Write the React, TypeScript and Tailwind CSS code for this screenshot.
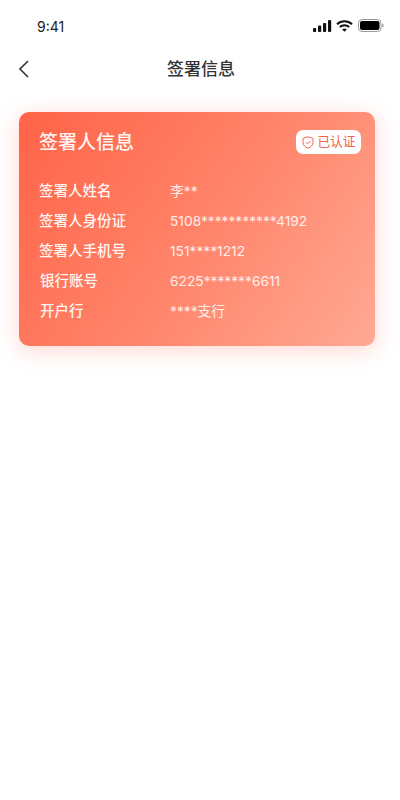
const FONT = "font-['Inter','Noto_Sans_CJK_SC',sans-serif]";

const ROWS = [
  { label: "签署人姓名", value: "李**", indent: false },
  { label: "签署人身份证", value: "5108***********4192", indent: false },
  { label: "签署人手机号", value: "151****1212", indent: false },
  { label: "银行账号", value: "6225*******6611", indent: true },
  { label: "开户行", value: "****支行", indent: true },
];

function StatusBar() {
  return (
    <div className="flex h-[44px] items-end justify-between pl-[37px] pr-[16px] pb-[9px]">
      <span className="text-[14px] leading-[17px] text-[#222222]">9:41</span>
      <div className="flex items-center gap-[4px] pb-[3px]">
        {/* signal */}
        <svg width="19" height="12" viewBox="0 0 19 12" fill="#111111">
          <rect x="0" y="8" width="3.2" height="4" rx="1" />
          <rect x="5" y="5.5" width="3.2" height="6.5" rx="1" />
          <rect x="10" y="3" width="3.2" height="9" rx="1" />
          <rect x="15" y="0" width="3.2" height="12" rx="1" />
        </svg>
        {/* wifi */}
        <svg width="17" height="12" viewBox="0 0 17 12" fill="none" stroke="#111111" strokeWidth="2">
          <path d="M1 4.2C5.2 0.2 11.8 0.2 16 4.2" />
          <path d="M3.8 7C6.5 4.5 10.5 4.5 13.2 7" />
          <path d="M8.5 11.8L6.2 9.4C7.5 8.3 9.5 8.3 10.8 9.4Z" fill="#111111" stroke="none" />
        </svg>
        {/* battery */}
        <svg width="26" height="13" viewBox="0 0 26 13" fill="none" className="ml-[1px]">
          <rect x="0.5" y="0.5" width="22.5" height="12" rx="3.5" stroke="#9a9a9a" />
          <rect x="2" y="2" width="19.5" height="9" rx="2" fill="#000000" />
          <path d="M24.2 4.5C25.2 4.9 25.6 5.6 25.6 6.5C25.6 7.4 25.2 8.1 24.2 8.5Z" fill="#9a9a9a" />
        </svg>
      </div>
    </div>
  );
}

function NavBar() {
  return (
    <div className="relative flex h-[50px] items-center justify-center pl-[2px]">
      <svg
        width="12"
        height="18"
        viewBox="0 0 12 18"
        fill="none"
        stroke="#333333"
        strokeWidth="1.6"
        className="absolute left-[18px] top-[16px]"
      >
        <path d="M10 1L2 9L10 17" />
      </svg>
      <h1 className="text-[17px] font-medium leading-[24px] text-[#333333]">签署信息</h1>
    </div>
  );
}

function VerifiedBadge() {
  return (
    <div className="flex h-[24px] w-[65px] items-center justify-center gap-[3px] rounded-[7px] bg-white pl-[1px] text-[#f4624c]">
      <svg width="12" height="13" viewBox="0 0 12 13" fill="none" stroke="currentColor" strokeWidth="1">
        <path d="M6 0.8L11 2.4V6.5C11 9.3 8.8 11.2 6 12.2C3.2 11.2 1 9.3 1 6.5V2.4Z" />
        <path d="M3.8 6.2L5.5 7.9L8.4 4.9" />
      </svg>
      <span className="text-[12.75px] leading-[16px]">已认证</span>
    </div>
  );
}

export default function App() {
  return (
    <div className={`${FONT} min-h-[800px] w-[400px] bg-white`}>
      <StatusBar />
      <NavBar />
      <div className="pl-[19px] pr-[25px] pt-[18px]">
        <div className="h-[234px] rounded-[10px] bg-[linear-gradient(125deg,#ff6347_0%,#ff8369_50%,#ffa994_100%)] pl-[20px] pr-[14px] pt-[18px] shadow-[0_4px_22px_rgba(255,120,95,0.3)]">
          <div className="flex items-center justify-between">
            <h2 className="pt-[2px] text-[19px] font-medium leading-[22px] text-white/95">签署人信息</h2>
            <VerifiedBadge />
          </div>
          <div className="mt-[26px] flex flex-col gap-[8px]">
            {ROWS.map((row) => (
              <div key={row.label} className="flex h-[22px] items-center">
                <span
                  className={`w-[131px] text-[14.5px] font-medium leading-[22px] text-white/95 ${row.indent ? "pl-[1px]" : ""}`}
                >
                  {row.label}
                </span>
                <span className="text-[13.75px] leading-[22px] text-white/85">{row.value}</span>
              </div>
            ))}
          </div>
        </div>
      </div>
    </div>
  );
}
